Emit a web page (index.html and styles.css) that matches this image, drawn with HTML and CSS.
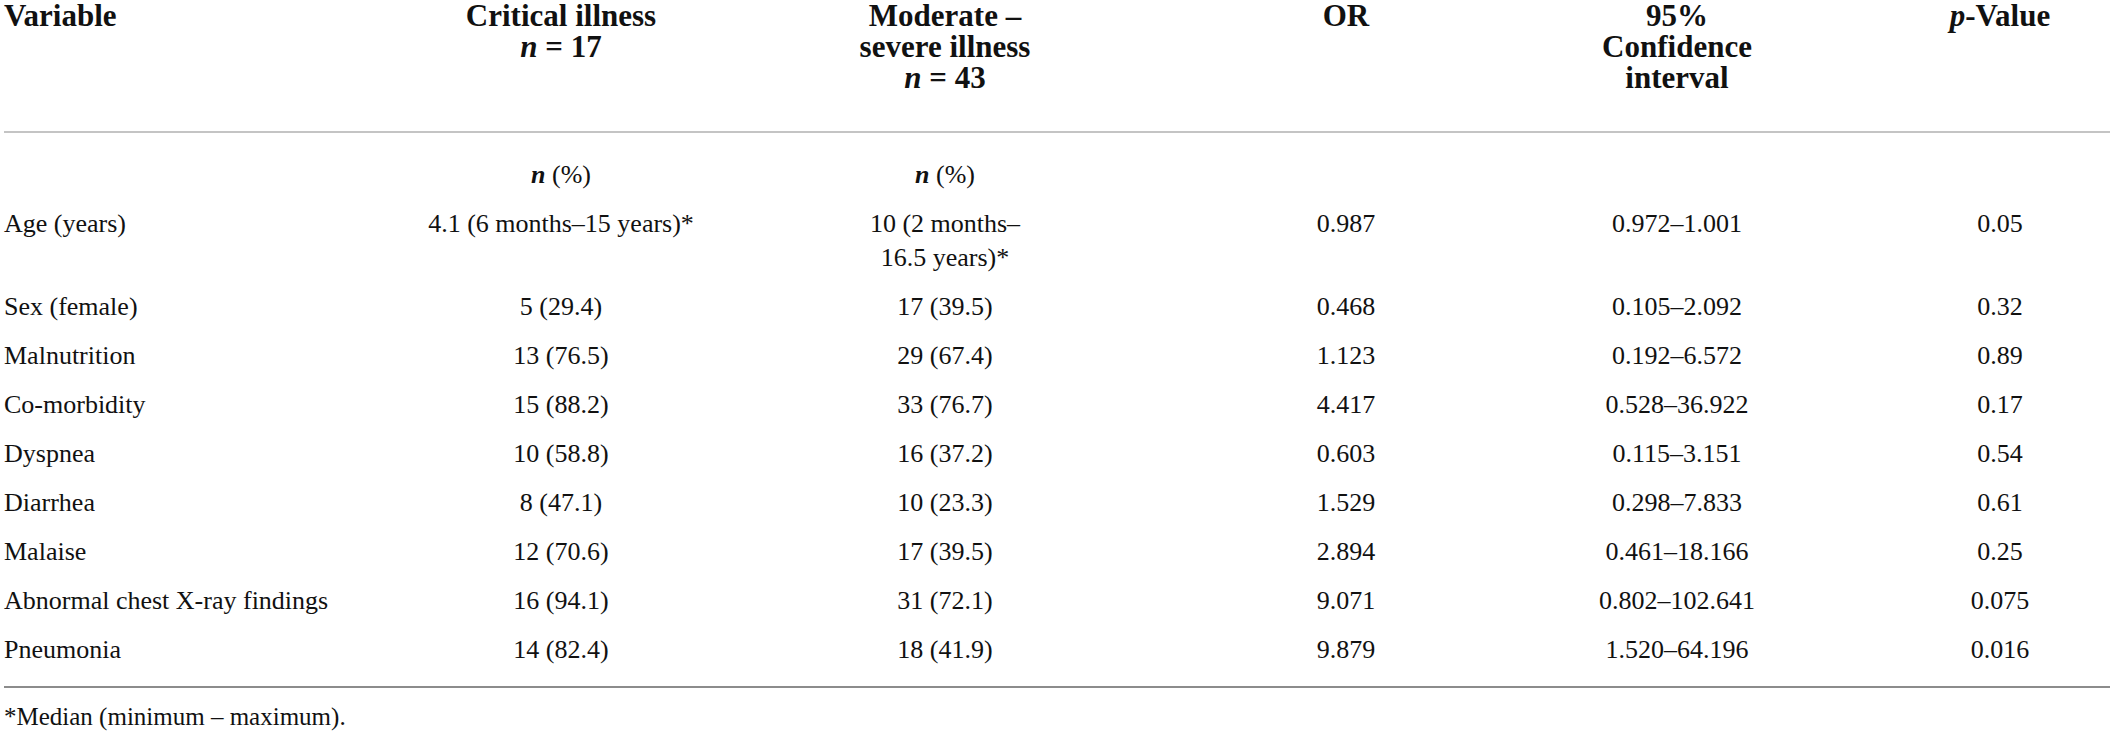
FILE: index.html
```html
<!DOCTYPE html>
<html lang="en">
<head>
    <meta charset="UTF-8">
    <title>Table - Critical vs moderate-severe illness</title>
    <link rel="stylesheet" href="styles.css">
</head>
<body>
    <div class="table">
        <div class="th first">Variable</div>
        <div class="th">Critical illness<br><i>n</i> = 17</div>
        <div class="th">Moderate –<br>severe illness<br><i>n</i> = 43</div>
        <div class="th">OR</div>
        <div class="th">95%<br>Confidence<br>interval</div>
        <div class="th"><i>p</i>-Value</div>

        <div class="rule light"></div>

        <div class="td first sub"></div>
        <div class="td sub"><b><i>n</i></b> (%)</div>
        <div class="td sub"><b><i>n</i></b> (%)</div>
        <div class="td sub"></div>
        <div class="td sub"></div>
        <div class="td sub"></div>

        <div class="td first">Age (years)</div>
        <div class="td">4.1 (6 months–15 years)*</div>
        <div class="td">10 (2 months–<br>16.5 years)*</div>
        <div class="td">0.987</div>
        <div class="td">0.972–1.001</div>
        <div class="td">0.05</div>

        <div class="td first">Sex (female)</div>
        <div class="td">5 (29.4)</div>
        <div class="td">17 (39.5)</div>
        <div class="td">0.468</div>
        <div class="td">0.105–2.092</div>
        <div class="td">0.32</div>

        <div class="td first">Malnutrition</div>
        <div class="td">13 (76.5)</div>
        <div class="td">29 (67.4)</div>
        <div class="td">1.123</div>
        <div class="td">0.192–6.572</div>
        <div class="td">0.89</div>

        <div class="td first">Co-morbidity</div>
        <div class="td">15 (88.2)</div>
        <div class="td">33 (76.7)</div>
        <div class="td">4.417</div>
        <div class="td">0.528–36.922</div>
        <div class="td">0.17</div>

        <div class="td first">Dyspnea</div>
        <div class="td">10 (58.8)</div>
        <div class="td">16 (37.2)</div>
        <div class="td">0.603</div>
        <div class="td">0.115–3.151</div>
        <div class="td">0.54</div>

        <div class="td first">Diarrhea</div>
        <div class="td">8 (47.1)</div>
        <div class="td">10 (23.3)</div>
        <div class="td">1.529</div>
        <div class="td">0.298–7.833</div>
        <div class="td">0.61</div>

        <div class="td first">Malaise</div>
        <div class="td">12 (70.6)</div>
        <div class="td">17 (39.5)</div>
        <div class="td">2.894</div>
        <div class="td">0.461–18.166</div>
        <div class="td">0.25</div>

        <div class="td first">Abnormal chest X-ray findings</div>
        <div class="td">16 (94.1)</div>
        <div class="td">31 (72.1)</div>
        <div class="td">9.071</div>
        <div class="td">0.802–102.641</div>
        <div class="td">0.075</div>

        <div class="td first last">Pneumonia</div>
        <div class="td last">14 (82.4)</div>
        <div class="td last">18 (41.9)</div>
        <div class="td last">9.879</div>
        <div class="td last">1.520–64.196</div>
        <div class="td last">0.016</div>

        <div class="rule dark"></div>
    </div>
    <p class="note">*Median (minimum – maximum).</p>
</body>
</html>
```

FILE: styles.css
```css
body {
    margin: 0;
    background: #fff;
    color: #111;
    font-family: "Liberation Serif", "Times New Roman", serif;
}
.table {
    display: grid;
    grid-template-columns: 456px 202px 566px 236px 426px 220px;
    padding: 0 4px;
}
.th {
    justify-self: center;
    text-align: center;
    font-weight: bold;
    font-size: 31px;
    line-height: 31px;
    padding: 0 0 38px;
    white-space: nowrap;
}
.td {
    justify-self: center;
    text-align: center;
    font-size: 26px;
    line-height: 34px;
    padding: 7px 0 8px;
    white-space: nowrap;
}
.first {
    justify-self: start;
    text-align: left;
}
.sub {
    padding: 25px 0 8px;
}
.last {
    padding-bottom: 19px;
}
.rule {
    grid-column: 1 / -1;
    height: 2px;
}
.rule.light {
    background: #c4c4c4;
}
.rule.dark {
    background: #8c8c8c;
}
.note {
    margin: 0;
    padding: 12px 4px 0;
    font-size: 25px;
    line-height: 34px;
}
```
